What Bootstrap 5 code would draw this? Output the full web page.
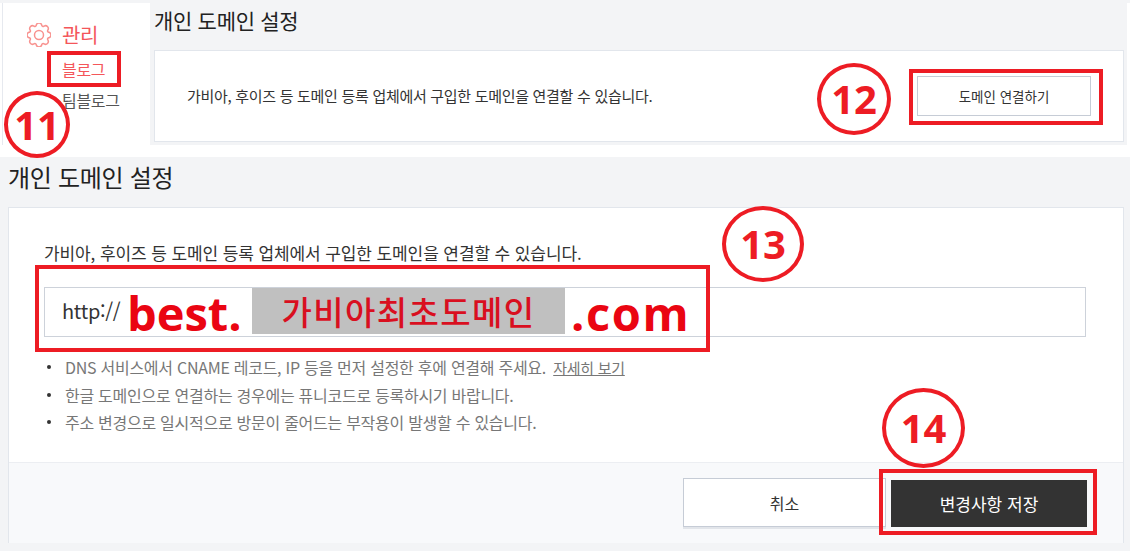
<!DOCTYPE html>
<html lang="ko">
<head>
<meta charset="utf-8">
<link href="https://cdn.jsdelivr.net/npm/bootstrap@5.3.0/dist/css/bootstrap.min.css" rel="stylesheet">
<style>
html,body{height:551px;overflow:hidden}
body{font-family:"Noto Sans CJK KR","Noto Sans",sans-serif;background:#fff;color:#333;position:relative;letter-spacing:-.3px;width:1130px}
.strip{height:3px;background:#f3f4f6}
.upper{height:142px;padding-left:2px;padding-right:3px}
.side{width:148px;border-left:1px solid #e6e9ef;padding:17px 0 0 24px;background:#fff}
.side-head{color:#f4565a;font-size:20px;line-height:30px;gap:11px}
.side-sub{font-size:16px;line-height:20px;padding-left:35px;color:#555}
.side-sub.act{color:#f4565a;margin-top:9px;margin-bottom:11px}
.upper-main{background:#f3f4f6;padding:0 3px 3px 4px}
.h-title{font-size:21px;font-weight:400;color:#222;margin:0;line-height:34px}
.upper-main .h-title{height:47px}
.lower .h-title{font-size:24px;height:47px}
.box{background:#fff;border:1px solid #e2e6ec;border-radius:0}
.upper-box{height:92px;padding:0 32px;font-size:15px;color:#333}
.link-btn{width:174px;height:40px;background:#fff;border:1px solid #c6ccd6;border-radius:0;font-size:13.5px;color:#333;padding:0}
.gapper{height:12px}
.lower{background:#f3f4f6;height:394px;padding:3px 6px 8px 8px}
.lower-box{height:336px}
.lower-body{padding:33px 37px 0 35px;height:254px;font-size:14px}
.lead-line{line-height:24px;height:46px;margin:0;color:#333;font-size:17px;letter-spacing:-.1px}
.url-field{height:50px;border:1px solid #cdd2da;padding-left:17px;font-size:20px;background:#fff;color:#333;line-height:46px}
.notes{margin:16px 0 0;padding:0;list-style:none;font-size:16px;color:#777;letter-spacing:-.27px}
.notes li{line-height:28px;height:27.5px;padding-left:21px;position:relative}
.notes li::before{content:"";position:absolute;left:3px;top:12px;width:4px;height:4px;border-radius:50%;background:#333}
.notes a{color:#777;margin-left:3px;font-size:15px}
.lower-foot{height:81px;background:#f8f9fb;border-top:1px solid #eceef2;padding:15px 36px 0 0;gap:5px}
.cancel-btn,.save-btn{height:49px;border-radius:0;font-size:16px;padding:0}
.cancel-btn{width:203px;background:#fff;border:1px solid #c6ccd6;color:#333;box-shadow:0 2px 0 #e2e5ea}
.save-btn{width:196px;height:47px;margin-top:2px;background:#333;border:1px solid #333;color:#fff;font-size:17px}
.mark-rect{position:absolute;border:4px solid #ed1c24;background:transparent;pointer-events:none}
.mark-circle{position:absolute;border:4px solid #ed1c24;border-radius:50%;color:#ed1c24;font-family:"Open Sans","Noto Sans",sans-serif;font-weight:700;letter-spacing:0;display:flex;align-items:center;justify-content:center;font-size:40px}
.m11r{left:47px;top:51px;width:74px;height:36px}
.m12r{left:909px;top:69px;width:194px;height:56px}
.m13r{left:35px;top:265px;width:675px;height:87px}
.m14r{left:879px;top:469px;width:218px;height:66px}
.m11c{left:4px;top:91px;width:66px;height:67px}
.m12c{left:817px;top:63px;width:74px;height:72px}
.m13c{left:722px;top:206px;width:82px;height:76px}
.m14c{left:882px;top:388px;width:83px;height:80px}
.st-a,.st-c{position:absolute;top:285px;font-size:47px;line-height:56px;color:#ea0512;font-family:"Open Sans",sans-serif;font-weight:700;letter-spacing:0}
.st-a{left:127px}
.st-c{left:571px;letter-spacing:1.6px}
.st-b{position:absolute;left:252px;top:288px;width:313px;height:46px;background:#c0c0c0;color:#d90f1f;font-size:33px;font-weight:500;letter-spacing:1.4px;text-align:center;line-height:47px}
</style>
</head>
<body>
<div class="strip"></div>
<div class="upper d-flex">
  <nav class="side">
    <div class="side-head d-flex align-items-center">
      <svg width="24" height="24" viewBox="0 0 16 16" fill="none" stroke="#f8928f" stroke-width="1"><circle cx="8" cy="8" r="3"/><path d="M9.796 1.343c-.527-1.79-3.065-1.79-3.592 0l-.094.319a.873.873 0 0 1-1.255.52l-.292-.16c-1.64-.892-3.433.902-2.54 2.541l.159.292a.873.873 0 0 1-.52 1.255l-.319.094c-1.79.527-1.79 3.065 0 3.592l.319.094a.873.873 0 0 1 .52 1.255l-.16.292c-.892 1.64.901 3.434 2.541 2.54l.292-.159a.873.873 0 0 1 1.255.52l.094.319c.527 1.79 3.065 1.79 3.592 0l.094-.319a.873.873 0 0 1 1.255-.52l.292.16c1.64.893 3.434-.902 2.54-2.541l-.159-.292a.873.873 0 0 1 .52-1.255l.319-.094c1.79-.527 1.79-3.065 0-3.592l-.319-.094a.873.873 0 0 1-.52-1.255l.16-.292c.893-1.64-.902-3.433-2.541-2.54l-.292.159a.873.873 0 0 1-1.255-.52l-.094-.319z"/></svg>
      <span>관리</span>
    </div>
    <div class="side-sub act">블로그</div>
    <div class="side-sub">팀블로그</div>
  </nav>
  <main class="upper-main flex-grow-1">
    <h2 class="h-title">개인 도메인 설정</h2>
    <div class="box upper-box d-flex align-items-center justify-content-between">
      <span>가비아, 후이즈 등 도메인 등록 업체에서 구입한 도메인을 연결할 수 있습니다.</span>
      <button class="btn link-btn" type="button">도메인 연결하기</button>
    </div>
  </main>
</div>
<div class="gapper"></div>
<section class="lower">
  <h2 class="h-title">개인 도메인 설정</h2>
  <div class="box lower-box">
    <div class="lower-body">
      <p class="lead-line">가비아, 후이즈 등 도메인 등록 업체에서 구입한 도메인을 연결할 수 있습니다.</p>
      <div class="url-field">http://</div>
      <ul class="notes">
        <li>DNS 서비스에서 CNAME 레코드, IP 등을 먼저 설정한 후에 연결해 주세요. <a href="#">자세히 보기</a></li>
        <li>한글 도메인으로 연결하는 경우에는 퓨니코드로 등록하시기 바랍니다.</li>
        <li>주소 변경으로 일시적으로 방문이 줄어드는 부작용이 발생할 수 있습니다.</li>
      </ul>
    </div>
    <div class="lower-foot d-flex justify-content-end align-items-start">
      <button class="btn cancel-btn" type="button">취소</button>
      <button class="btn save-btn" type="button">변경사항 저장</button>
    </div>
  </div>
</section>
<div class="st-a">best.</div>
<div class="st-b">가비아최초도메인</div>
<div class="st-c">.com</div>
<div class="mark-rect m11r"></div>
<div class="mark-circle m11c">11</div>
<div class="mark-rect m12r"></div>
<div class="mark-circle m12c">12</div>
<div class="mark-rect m13r"></div>
<div class="mark-circle m13c">13</div>
<div class="mark-rect m14r"></div>
<div class="mark-circle m14c">14</div>
<script src="https://cdn.jsdelivr.net/npm/bootstrap@5.3.0/dist/js/bootstrap.bundle.min.js"></script>
</body>
</html>
